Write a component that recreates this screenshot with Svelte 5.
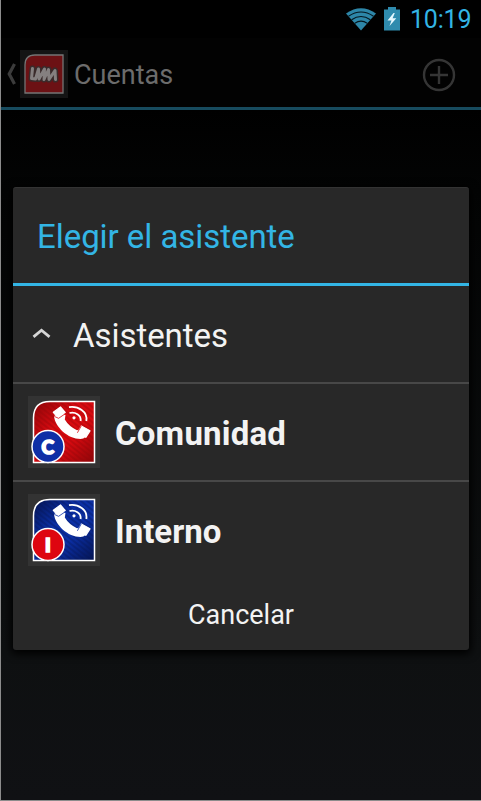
<script>
  const items = [
    { name: 'Comunidad', letter: 'C', tile: '#d90a10', dark: '#8d0508', badge: '#0f2fa6', spacing: 0.2 },
    { name: 'Interno', letter: 'I', tile: '#0b2fa6', dark: '#041452', badge: '#de0510', spacing: 0 }
  ];
</script>

<div class="screen">
  <div class="status">
    <svg class="wifi" width="32" height="24" viewBox="0 0 32 24">
      <path d="M1 6.5Q16-4 31 6.5L16 23.5Z" fill="#2d86a8" />
      <g fill="none" stroke="#04161e" stroke-width="1.1">
        <path d="M3.5 9.3Q16 .7 28.5 9.3" />
        <path d="M6.6 12.8Q16 6.2 25.4 12.8" />
        <path d="M9.8 16.3Q16 12 22.2 16.3" />
      </g>
    </svg>
    <svg class="battery" width="16" height="24" viewBox="0 0 16 24">
      <path d="M0 2.5H4V0H12V2.5H16V23.5H0Z" fill="#2f8bae" />
      <path d="M9.5 6L3.5 13.5H7.5L5.5 19L12.3 11.3H8.6L10.8 6Z" fill="#e6f8ff" />
    </svg>
    <span class="clock">10:19</span>
  </div>
  <header>
    <svg class="back" width="11" height="24" viewBox="0 0 11 24">
      <path d="M8.5 2L3.2 12L8.5 22" fill="none" stroke="#3c3c3c" stroke-width="3.2" />
    </svg>
    <svg class="logo" width="48" height="48" viewBox="0 0 48 48">
      <rect width="48" height="48" fill="#141414" />
      <path d="M5 43V15Q5 5 15 5H43V43Z" fill="#6c1114" stroke="#747474" stroke-width="1.3" />
      <g fill="none" stroke-linecap="round" stroke-linejoin="round">
        <path d="M12.5 18.5L11.5 28.5L15.5 29L18.5 19L19 29L24.5 19L24 29.5L28.5 19.5L29 29.5L35 20.5L35.5 29.5" stroke="#3a2b2b" stroke-width="6" />
        <path d="M12.5 18.5L11.5 28.5L15.5 29L18.5 19L19 29L24.5 19L24 29.5L28.5 19.5L29 29.5L35 20.5L35.5 29.5" stroke="#858080" stroke-width="3" />
      </g>
    </svg>
    <h1>Cuentas</h1>
    <svg class="add" width="34" height="34" viewBox="0 0 34 34" fill="none" stroke="#353535" stroke-width="2.4">
      <circle cx="17" cy="17" r="15" />
      <path d="M17 8V26M8 17H26" />
    </svg>
  </header>

  <section class="dialog">
    <h2><span>Elegir el asistente</span></h2>
    <div class="group">
      <svg width="20" height="12" viewBox="0 0 20 12">
        <path d="M2.5 8.8L10.5 2.2L18.5 8.8" fill="none" stroke="#d6d6d6" stroke-width="2.8" />
      </svg>
      <span>Asistentes</span>
    </div>
    {#each items as item}
      <div class="row">
        <svg width="72" height="72" viewBox="0 0 72 72">
          <defs>
            <linearGradient id="g{item.letter}" x1="0" y1="0" x2="1" y2="1">
              <stop offset="0" stop-color={item.dark} />
              <stop offset=".38" stop-color={item.tile} />
              <stop offset=".62" stop-color={item.tile} />
              <stop offset="1" stop-color={item.dark} />
            </linearGradient>
            <pattern id="p{item.letter}" width="4" height="4" patternUnits="userSpaceOnUse" patternTransform="rotate(38)">
              <path d="M0 1H4" stroke={item.dark} stroke-width="1.2" opacity=".55" />
            </pattern>
          </defs>
          <rect width="72" height="72" fill="#333" />
          <path d="M5.5 66.5V22Q5.5 5.5 22 5.5H66.5V66.5Z" fill="url(#g{item.letter})" />
          <path d="M5.5 66.5V22Q5.5 5.5 22 5.5H66.5V66.5Z" fill="url(#p{item.letter})" stroke="#fff" stroke-width="1.5" />
          <path d="M26 20C27 31 40 43 52.5 43Q55.5 42.8 57.5 41L52 33.5L49 34.2Q41 30.5 36.8 23.5L37.5 19L33 17Z" fill="#fff" />
          <path d="M25.3 16.3L32.5 11L37.2 16.5L30 21.5ZM53.3 30L62 34.8L57.8 41.3L50 36.3Z" fill="#fff" stroke="#fff" stroke-width="1.2" stroke-linejoin="round" />
          <path d="M26.3 20.4L30.6 22.3L37.8 17.4M49.4 36.8L53.3 29.8" fill="none" stroke={item.tile} stroke-width=".8" />
          <g fill="none" stroke="#fff" stroke-width="1.8">
            <path d="M41 11.2C50 9.8 60 15.5 58.3 25" />
            <path d="M41.5 17C47 15.5 53.5 19 52.6 25" />
          </g>
          <circle cx="46" cy="21.8" r="1.6" fill="#fff" />
          <circle cx="20" cy="50.5" r="16" fill={item.badge} stroke="#fff" stroke-width="1.5" />
          <text x="19.8" y="57.6" text-anchor="middle" font-family="Lato, sans-serif" font-weight="900" font-size="19" fill="#fff" stroke="#fff" stroke-width="1.7">{item.letter}</text>
        </svg>
        <span class="name" style="letter-spacing: {item.spacing}px">{item.name}</span>
      </div>
    {/each}
    <div class="cancel"><span>Cancelar</span></div>
  </section>
</div>

<style>
  :global(body) { margin: 0; background: #000; }
  .screen {
    box-sizing: border-box;
    width: 481px;
    height: 801px;
    overflow: hidden;
    border-left: 1px solid #8c8c8c;
    border-bottom: 1px solid #8c8c8c;
    background: linear-gradient(#000 0, #000 110px, #030404 190px, #0e1011 650px, #101114 800px);
    font-family: Roboto, sans-serif;
  }
  .status { height: 38px; display: flex; align-items: flex-start; background: #000; }
  .wifi { margin: 7px 0 0 344px; }
  .battery { margin: 7px 0 0 7px; }
  .clock { margin: 5px 0 0 10px; font-size: 25px; line-height: 30px; letter-spacing: -0.2px; color: #33b5e5; white-space: nowrap; }
  header { height: 69px; display: flex; align-items: center; border-bottom: 3px solid #174b5e; background: #020202; }
  .back { margin: 3px 3px 0 5px; }
  .logo { margin-top: 3px; }
  h1 { margin: 4px 0 0 6px; font-size: 27px; line-height: 32px; font-weight: 400; color: #6c6c6c; }
  .add { margin: 4px 25px 0 auto; }
  .dialog {
    box-sizing: border-box;
    width: 456px;
    height: 463px;
    margin: 77px 0 0 12px;
    border-radius: 3px;
    border-top: 1px solid #333;
    background: #282828;
    box-shadow: 0 2px 8px 2px #000;
  }
  h2 {
    box-sizing: border-box;
    height: 98px;
    margin: 0;
    padding: 29px 0 0 24px;
    border-bottom: 3px solid #33b5e5;
    font-size: 33px;
    line-height: 40px;
    font-weight: 400;
    letter-spacing: -0.05px;
    color: #33b5e5;
  }
  .group { display: flex; align-items: center; height: 96px; font-size: 33px; letter-spacing: -0.05px; color: #f3f3f3; }
  .group svg { margin: 0 22px 0 18px; }
  .group span { margin-top: 3px; }
  .row { display: flex; align-items: center; height: 96px; border-top: 2px solid #484848; }
  .row svg { margin: 0 15px; }
  .name { font-size: 33px; font-weight: 700; color: #f3f3f3; margin-top: 3px; }
  .cancel { height: 64px; text-align: center; font-size: 27px; line-height: 75px; color: #f3f3f3; }
</style>
